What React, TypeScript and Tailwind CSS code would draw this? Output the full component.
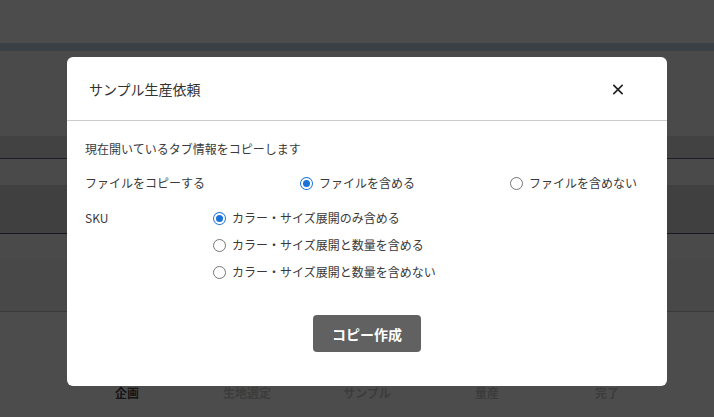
import React from "react";

const font = { fontFamily: '"Noto Sans CJK JP", "Noto Sans", sans-serif' };

function Radio({ checked }: { checked?: boolean }) {
  return (
    <span className="relative inline-flex h-[13px] w-[13px] shrink-0 items-center justify-center">
      {checked ? (
        <span className="flex h-[13px] w-[13px] items-center justify-center rounded-full bg-[#1a73d6]">
          <span className="flex h-[11px] w-[11px] items-center justify-center rounded-full bg-white">
            <span className="h-[7px] w-[7px] rounded-full bg-[#1a73d6]" />
          </span>
        </span>
      ) : (
        <span className="h-[13px] w-[13px] rounded-full border border-[#767676] bg-white" />
      )}
    </span>
  );
}

function Option({ label, checked }: { label: string; checked?: boolean }) {
  return (
    <label className="flex h-[18px] items-center gap-[6px] text-[12px] leading-[18px] text-[#3a3a3a]">
      <Radio checked={checked} />
      <span>{label}</span>
    </label>
  );
}

export default function App() {
  return (
    <div className="relative h-[417px] w-[714px] overflow-hidden bg-[#4c4c4c]" style={font}>
      {/* background page under overlay */}
      <div className="flex h-full flex-col">
        <div className="h-[43px] bg-[#4c4c4c]" />
        <div className="h-[8px] bg-[#394046]" />
        <div className="h-[85px] bg-[#4a4a4a]" />
        <div className="h-[22px] bg-[#424242]" />
        <div className="h-[1px] bg-[#1c1c24]" />
        <div className="h-[26px] bg-[#4a4a4a]" />
        <div className="h-[48px] bg-[#404040]" />
        <div className="h-[1px] bg-[#17171f]" />
        <div className="h-[25px] bg-[#4a4a4a]" />
        <div className="h-[52px] bg-[#484848]" />
        <div className="h-[1px] bg-[#3a3a3a]" />
        <div className="flex-1 bg-[#4c4c4c] pt-[72px]">
          <div className="ml-[67px] grid w-[600px] grid-cols-5 text-center text-[12px] font-bold leading-[18px]">
            <span className="text-[#141414]">企画</span>
            <span className="text-[#3c3c3c]">生地選定</span>
            <span className="text-[#3c3c3c]">サンプル</span>
            <span className="text-[#3c3c3c]">量産</span>
            <span className="text-[#3c3c3c]">完了</span>
          </div>
        </div>
      </div>

      {/* modal */}
      <div className="absolute left-[67px] top-[57px] w-[600px] rounded-[6px] bg-white">
        <div className="flex h-[63px] items-start justify-between pl-[22px] pr-[44px] pt-[20px]">
          <h2 className="text-[14px] leading-[24px] text-[#333333]">サンプル生産依頼</h2>
          <button className="mt-[7px] flex h-[10px] w-[10px] items-center justify-center">
            <svg width="11" height="11" viewBox="0 0 11 11">
              <path d="M1 1 L10 10 M10 1 L1 10" stroke="#222" strokeWidth="1.8" strokeLinecap="square" />
            </svg>
          </button>
        </div>
        <div className="h-[1px] bg-[#cccccc]" />
        <div className="px-[18px] pb-[34px] pt-[19px] text-[12px] leading-[18px] text-[#3a3a3a]">
          <p>現在開いているタブ情報をコピーします</p>
          <div className="mt-[16px] flex items-center pr-[12px]">
            <span className="w-[215px]">ファイルをコピーする</span>
            <div className="flex flex-1 items-center justify-between">
              <Option label="ファイルを含める" checked />
              <Option label="ファイルを含めない" />
            </div>
          </div>
          <div className="mt-[17px] flex items-start">
            <span className="w-[128px] leading-[18px]">SKU</span>
            <div className="flex flex-col gap-[9px]">
              <Option label="カラー・サイズ展開のみ含める" checked />
              <Option label="カラー・サイズ展開と数量を含める" />
              <Option label="カラー・サイズ展開と数量を含めない" />
            </div>
          </div>
          <div className="mt-[34px] flex justify-center">
            <button className="h-[37px] w-[108px] rounded-[4px] bg-[#616161] text-[14px] font-bold text-white">
              コピー作成
            </button>
          </div>
        </div>
      </div>
    </div>
  );
}
